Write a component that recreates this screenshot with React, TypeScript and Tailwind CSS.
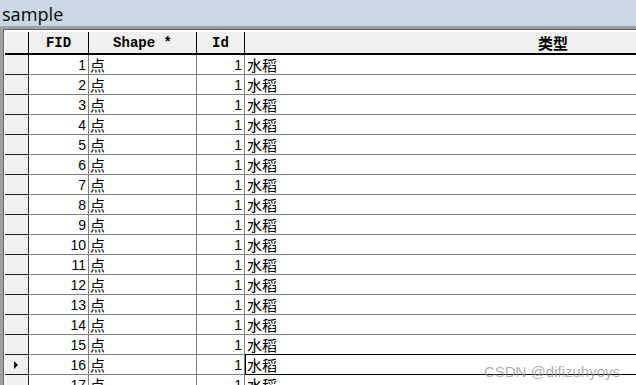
import React from "react";

const rows = Array.from({ length: 17 }, (_, i) => i + 1);
const SELECTED = 16;

const cjk = { fontFamily: '"Noto Sans CJK SC", "Liberation Sans", sans-serif' };
const num = { fontFamily: '"Liberation Sans", "Noto Sans CJK SC", sans-serif' };
const head = { fontFamily: '"Liberation Mono", "Noto Sans CJK SC", monospace' };

export default function App() {
  return (
    <div className="relative w-[636px] h-[385px] overflow-hidden bg-white">
      {/* window title */}
      <div
        className="h-[26px] bg-[#cad8e6] flex items-center pl-[2px] pt-[2px] text-[18px] text-[#111] leading-none"
        style={{ fontFamily: '"Noto Sans", "Liberation Sans", sans-serif' }}
      >
        sample
      </div>

      {/* grid frame */}
      <div className="border-t-[3px] border-l-[3px] border-[#a0a0a0]">
        <div className="border-t border-l border-[#646464] pt-[2px] pl-[1px] bg-white w-[900px]">
          {/* header */}
          <div className="flex h-[23px] bg-[#f0f0f0] border-b-2 border-black text-[14px] leading-[18px] font-bold text-black" style={head}>
            <div className="w-[24px] shrink-0 border-r border-black" />
            <div className="w-[60px] shrink-0 border-r border-black flex items-center justify-center">FID</div>
            <div className="w-[108px] shrink-0 border-r border-black flex items-center justify-center">Shape *</div>
            <div className="w-[48px] shrink-0 border-r border-black flex items-center justify-center">Id</div>
            <div className="w-[616px] shrink-0 flex items-center justify-center text-[15px]" style={cjk}>
              类型
            </div>
          </div>

          {rows.map((n) => {
            const sel = n === SELECTED;
            return (
              <div key={n} className="flex h-[20px] text-[15px] leading-[18px] text-black">
                <div className="w-[24px] shrink-0 bg-[#f0f0f0] border-r border-b border-[#202020] flex items-center justify-center">
                  {sel && (
                    <svg width="5" height="8" viewBox="0 0 5 8">
                      <path d="M0 0 L4 4 L0 8 Z" fill="#000" />
                    </svg>
                  )}
                </div>
                <div className="w-[60px] shrink-0 border-r border-b border-[#808080] flex items-center justify-end pr-[2px] text-[14px]" style={num}>
                  {n}
                </div>
                <div className="w-[108px] shrink-0 border-r border-b border-[#808080] flex items-center pl-[1px]" style={cjk}>
                  点
                </div>
                <div className="w-[48px] shrink-0 border-r border-b border-[#808080] flex items-center justify-end pr-[2px] text-[14px]" style={num}>
                  1
                </div>
                <div
                  className={
                    sel
                      ? "w-[616px] shrink-0 border border-black -mt-px h-[21px] flex items-center pl-[1px]"
                      : "w-[616px] shrink-0 border-b border-[#808080] flex items-center pl-[2px]"
                  }
                  style={cjk}
                >
                  水稻
                </div>
              </div>
            );
          })}
        </div>
      </div>

      {/* watermark */}
      <div
        className="absolute right-[16px] bottom-[6px] text-[15px] text-[#9a9a9a]/80 leading-none"
        style={{ fontFamily: '"Liberation Sans", sans-serif' }}
      >
        CSDN @difizuhyoys
      </div>
    </div>
  );
}
